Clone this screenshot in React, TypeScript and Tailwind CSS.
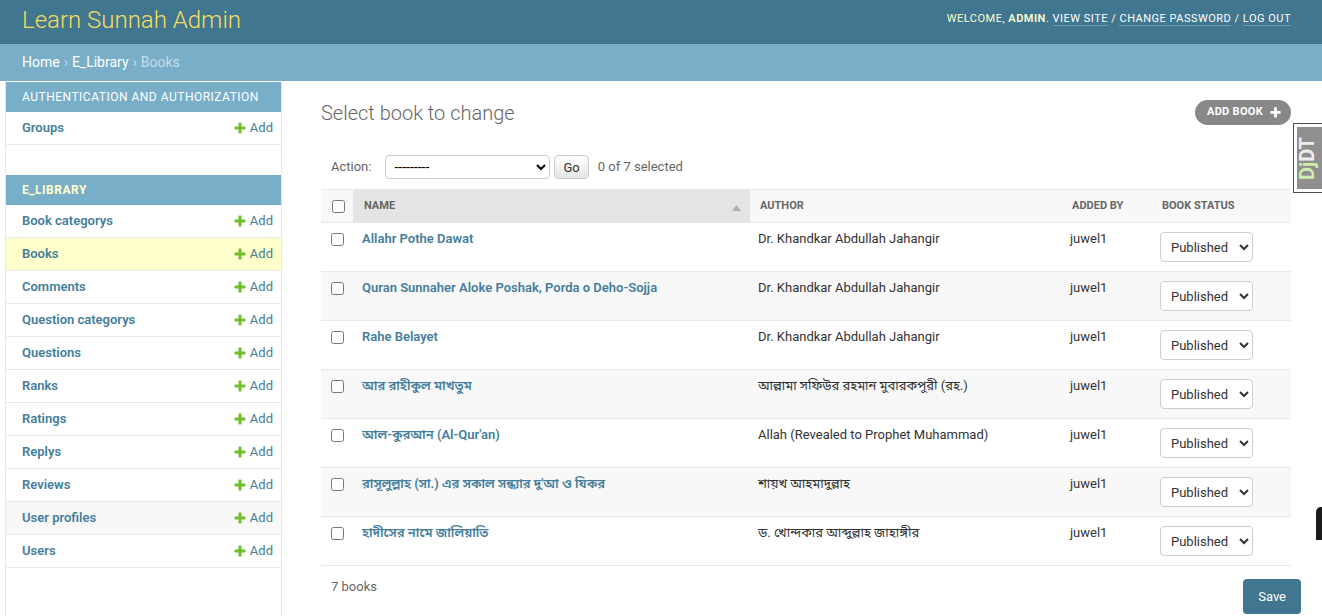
import React from 'react';

const appModels = [
  'Book categorys',
  'Books',
  'Comments',
  'Question categorys',
  'Questions',
  'Ranks',
  'Ratings',
  'Replys',
  'Reviews',
  'User profiles',
  'Users',
];

type Book = { name: string; author: string; addedBy: string };

const books: Book[] = [
  { name: 'Allahr Pothe Dawat', author: 'Dr. Khandkar Abdullah Jahangir', addedBy: 'juwel1' },
  { name: 'Quran Sunnaher Aloke Poshak, Porda o Deho-Sojja', author: 'Dr. Khandkar Abdullah Jahangir', addedBy: 'juwel1' },
  { name: 'Rahe Belayet', author: 'Dr. Khandkar Abdullah Jahangir', addedBy: 'juwel1' },
  { name: 'আর রাহীকুল মাখতুম', author: 'আল্লামা সফিউর রহমান মুবারকপুরী (রহ.)', addedBy: 'juwel1' },
  { name: "আল-কুরআন (Al-Qur'an)", author: 'Allah (Revealed to Prophet Muhammad)', addedBy: 'juwel1' },
  { name: "রাসূলুল্লাহ (সা.) এর সকাল সন্ধ্যার দু'আ ও যিকর", author: 'শায়খ আহমাদুল্লাহ', addedBy: 'juwel1' },
  { name: 'হাদীসের নামে জালিয়াতি', author: 'ড. খোন্দকার আব্দুল্লাহ জাহাঙ্গীর', addedBy: 'juwel1' },
];

// same plus glyph as django's icon-addlink.svg
const PlusIcon = ({ color = '#70bf2b', size = 14 }: { color?: string; size?: number }) => (
  <svg width={size} height={size} viewBox="0 0 1792 1792" className="shrink-0">
    <path
      fill={color}
      d="M1600 796v192q0 40-28 68t-68 28h-416v416q0 40-28 68t-68 28h-192q-40 0-68-28t-28-68v-416h-416q-40 0-68-28t-28-68v-192q0-40 28-68t68-28h416v-416q0-40 28-68t68-28h192q40 0 68 28t28 68v416h416q40 0 68 28t28 68z"
    />
  </svg>
);

const AddLink = () => (
  <span className="flex items-center gap-[3px] text-[13px] text-[#447e9b]">
    <PlusIcon />
    Add
  </span>
);

const SidebarRow = ({ label, current, hover }: { label: string; current?: boolean; hover?: boolean }) => (
  <div
    className={`flex items-center justify-between h-[33px] border-b border-[#e8e8e8] pl-[16px] pr-[8px] ${
      current ? 'bg-[#ffc]' : hover ? 'bg-[#f8f8f8]' : ''
    }`}
  >
    <span className="text-[13px] font-semibold text-[#447e9b]">{label}</span>
    <AddLink />
  </div>
);

const App: React.FC = () => {
  return (
    <div className="relative w-[1322px] h-[616px] overflow-hidden bg-white text-[#333] font-['Roboto','Noto_Sans','Noto_Sans_Bengali','Lohit_Bengali','FreeSans',sans-serif]">
      <header className="flex items-center justify-between h-[44px] bg-[#417690] pl-[22px] pr-[31px] pb-[5px]">
        <div className="text-[24px] font-light leading-[28px] text-[#f5dd5d]">Learn Sunnah Admin</div>
        <div className="text-[11px] tracking-[0.5px] uppercase text-[#ffc]">
          Welcome, <strong className="font-semibold">admin</strong>.{' '}
          <a className="text-white border-b border-[rgba(255,255,255,0.25)]">View site</a> /{' '}
          <a className="text-white border-b border-[rgba(255,255,255,0.25)]">Change password</a> /{' '}
          <a className="text-white border-b border-[rgba(255,255,255,0.25)]">Log out</a>
        </div>
      </header>

      <div className="flex items-center h-[37px] bg-[#79aec8] pl-[22px] text-[14px] text-[#c4dce8]">
        <a className="text-white">Home</a>
        <span className="mx-[4px]">›</span>
        <a className="text-white">E_Library</a>
        <span className="mx-[4px]">›</span>
        <span>Books</span>
      </div>

      <div className="flex h-[535px]">
        <nav className="ml-[5px] w-[277px] shrink-0 border-x border-[#e8e8e8] pt-[1px]">
          <div className="flex items-center h-[30px] bg-[#79aec8] pl-[16px] text-[12px] tracking-[0.5px] uppercase text-white">
            Authentication and Authorization
          </div>
          <SidebarRow label="Groups" />

          <div className="flex items-center h-[30px] mt-[30px] bg-[#79aec8] pl-[16px] text-[12px] font-bold tracking-[0.5px] uppercase text-[#ffc]">
            E_Library
          </div>
          {appModels.map((m) => (
            <SidebarRow key={m} label={m} current={m === 'Books'} hover={m === 'User profiles'} />
          ))}
        </nav>

        <main className="flex-1 pl-[39px] pr-[21px] pt-[19px]">
          <div className="flex items-center justify-between mr-[10px] mb-[21px]">
            <h1 className="text-[20px] font-light leading-[24px] text-[#666]">Select book to change</h1>
            <a className="flex items-center gap-[6px] h-[25px] rounded-full bg-[#888] pl-[12px] pr-[9px] text-[11px] font-bold tracking-[0.3px] uppercase text-white">
              Add book
              <PlusIcon color="#ffffff" size={13} />
            </a>
          </div>

          <div className="flex items-center pt-[9px] pb-[10px] pl-[10px] text-[13px] text-[#666]">
            <label>Action:</label>
            <select className="ml-[14px] h-[24px] w-[165px] rounded-[4px] border border-[#ccc] bg-white pl-[4px] text-[14px] text-black">
              <option>---------</option>
            </select>
            <button className="ml-[4px] h-[24px] rounded-[4px] border border-[#ccc] bg-white px-[8px] text-[13px] leading-none text-[#333] shadow-[inset_0_-15px_20px_-10px_rgba(0,0,0,0.15)]">
              Go
            </button>
            <span className="ml-[9px]">0 of 7 selected</span>
          </div>

          <div className="w-[970px]">
            <div className="flex h-[34px] border-y border-[#e8e8e8] bg-[#f8f8f8] text-[11px] font-bold uppercase text-[#666]">
              <div className="flex items-center w-[32px] pl-[11px]">
                <input type="checkbox" />
              </div>
              <div className="flex items-center justify-between w-[397px] bg-[#e4e4e4] pl-[11px] pr-[9px]">
                <span>Name</span>
                <svg width="9" height="6" viewBox="0 0 9 6" className="mt-[3px]">
                  <polygon points="4.5,0 9,6 0,6" fill="#b0b0b0" />
                </svg>
              </div>
              <div className="flex items-center w-[312px] pl-[10px]">Author</div>
              <div className="flex items-center w-[90px] pl-[10px]">Added by</div>
              <div className="flex items-center flex-1 pl-[10px]">Book status</div>
            </div>

            {books.map((b, i) => (
              <div
                key={b.name}
                className={`flex items-start h-[49px] border-b border-[#e8e8e8] text-[13px] leading-[16px] ${
                  i % 2 === 1 ? 'bg-[#f8f8f8]' : 'bg-white'
                }`}
              >
                <div className="w-[32px] pl-[10px] pt-[10px]">
                  <input type="checkbox" />
                </div>
                <div className="w-[397px] pl-[9px] pr-[8px] pt-[8px]">
                  <a className="font-semibold text-[#447e9b]">{b.name}</a>
                </div>
                <div className="w-[312px] px-[8px] pt-[8px]">{b.author}</div>
                <div className="w-[90px] px-[8px] pt-[8px]">{b.addedBy}</div>
                <div className="flex-1 px-[8px] pt-[9px]">
                  <select className="h-[30px] w-[93px] rounded-[4px] border border-[#ccc] bg-white px-[6px] text-[13px] text-[#333]">
                    <option>Published</option>
                  </select>
                </div>
              </div>
            ))}
          </div>

          <div className="flex items-start justify-between">
            <p className="pl-[10px] pt-[10px] text-[13px] leading-[22px] text-[#666]">7 books</p>
            <button className="mt-[13px] h-[35px] rounded-[4px] bg-[#417690] px-[15px] text-[13px] text-white">
              Save
            </button>
          </div>
        </main>
      </div>

      {/* debug toolbar handle, sits over the page edge */}
      <div className="absolute left-[1293px] top-[123px] w-[40px] h-[70px] border border-[#4d4d4d] bg-white p-[3px]">
        <div className="flex h-full items-center justify-center bg-[#8f8f8f] pr-[12px]">
          <span className="rotate-180 [writing-mode:vertical-rl] text-[20px] font-bold leading-none">
            <span className="text-[#ccefaa]">Dj</span>
            <span className="text-[#eee]">DT</span>
          </span>
        </div>
      </div>
      <div className="absolute left-[1316px] top-[507px] w-[10px] h-[33px] rounded-tl-[5px] bg-[#1a1a1a]" />
    </div>
  );
};

export default App;
